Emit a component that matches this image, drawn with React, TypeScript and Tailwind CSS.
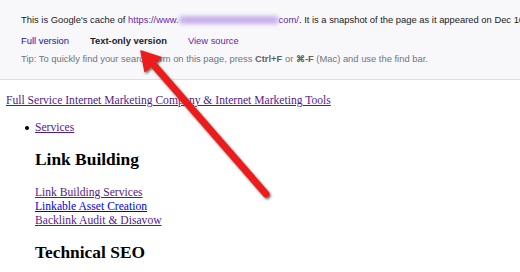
export default function App() {
  return (
    <div className="relative w-[520px] h-[272px] overflow-hidden bg-white">
      {/* cache banner */}
      <div
        className="h-[80px] bg-[#f8f8fa] border-b border-[#dedfe3] pl-[21px] pt-[13px] text-[9.4px] text-[#202124] whitespace-nowrap overflow-hidden"
        style={{ fontFamily: '"Liberation Sans", Arial, sans-serif' }}
      >
        <div className="flex items-center h-[14px]">
          <span className="shrink-0">This is Google&apos;s cache of&nbsp;</span>
          <span className="shrink-0 text-[#681da8]">https://www.</span>
          <span className="shrink-0 w-[100px] h-[8px] bg-[#c6aee9] blur-[2px] rounded-sm" />
          <span className="shrink-0 text-[#681da8]">com/</span>
          <span className="shrink-0">. It is a snapshot of the page as it appeared on Dec 16, 2019 17:55:01 GMT.</span>
        </div>
        <div className="flex items-center h-[14px] mt-[7px] gap-[21px]">
          <span className="text-[#1a0dab]">Full version</span>
          <span className="font-bold text-[#202124]">Text-only version</span>
          <span className="text-[#681da8]">View source</span>
        </div>
        <div className="flex items-center h-[14px] mt-[4px] text-[#70757a]">
          <span>
            Tip: To quickly find your search term on this page, press{" "}
            <b className="text-[#5f6368]">Ctrl+F</b> or <b className="text-[#5f6368]">⌘-F</b> (Mac) and use the find bar.
          </span>
        </div>
      </div>

      {/* page body */}
      <div
        className="pl-[6px] pt-[14px] text-[11.6px] leading-[14px] text-black"
        style={{ fontFamily: '"Liberation Serif", "Times New Roman", serif' }}
      >
        <div className="text-[#551a8b] underline">
          Full Service Internet Marketing Company &amp; Internet Marketing Tools
        </div>
        <ul className="mt-[13px] pl-[29px]">
          <li className="flex items-center">
            <span className="-ml-[10px] mr-[6px] w-[4px] h-[4px] rounded-full bg-black" />
            <span className="text-[#551a8b] underline">Services</span>
          </li>
        </ul>
        <div className="pl-[29px]">
          <h2 className="mt-[14px] text-[17.4px] leading-[20px] font-bold">Link Building</h2>
          <div className="mt-[17px] flex flex-col">
            <span className="text-[#551a8b] underline">Link Building Services</span>
            <span className="text-[#0000ee] underline">Linkable Asset Creation</span>
            <span className="text-[#551a8b] underline">Backlink Audit &amp; Disavow</span>
          </div>
          <h2 className="mt-[14px] text-[17.4px] leading-[20px] font-bold">Technical SEO</h2>
        </div>
      </div>

      {/* annotation arrow */}
      <svg className="absolute inset-0" width="520" height="272" viewBox="0 0 520 272">
        <defs>
          <filter id="sh" x="-20%" y="-20%" width="140%" height="140%">
            <feDropShadow dx="1.2" dy="1.5" stdDeviation="0.9" floodColor="#1d3b3b" floodOpacity="0.75" />
          </filter>
        </defs>
        <g filter="url(#sh)" fill="#ec1c1c" stroke="#ec1c1c">
          <line x1="266" y1="194" x2="152" y2="63" strokeWidth="7" strokeLinecap="round" />
          <polygon points="141,51 161,57.5 145,71.5" strokeWidth="1.5" strokeLinejoin="round" />
        </g>
      </svg>
    </div>
  );
}
